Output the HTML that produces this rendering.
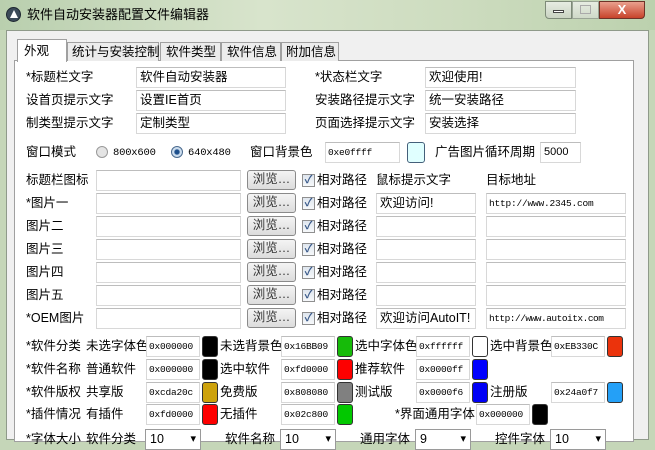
<!DOCTYPE html>
<html><head><meta charset="utf-8"><style>
*{margin:0;padding:0;box-sizing:border-box}
body{width:655px;height:440px;overflow:hidden;position:relative;background:#c5d6b8;font-family:"Liberation Sans","Noto Sans CJK SC",sans-serif;font-size:12.5px;color:#000}
.a{position:absolute;white-space:nowrap}
.t{line-height:16px}
.in{position:absolute;background:#fff;border:1px solid #d8d8d8;border-top-color:#bdbdbd;height:21px;line-height:19px;padding-left:3px;font-size:12.5px;white-space:nowrap;overflow:hidden}
.m{font-family:"Liberation Mono","Noto Sans CJK SC",monospace;font-size:9.5px;letter-spacing:-0.2px;padding-left:2px}
.btn{position:absolute;width:49px;height:20px;border:1px solid #8a8a8a;border-radius:3px;background:linear-gradient(#f4f4f4,#dcdcdc);text-align:center;line-height:17px;color:#333}
.cb{position:absolute;width:13px;height:13px;border:1px solid #8f8f8f;background:linear-gradient(#dfe6ee,#f6f8fa);font-size:11px;line-height:11px;text-align:center;color:#3a5a8a;font-weight:bold}
.sw{position:absolute;width:16px;height:21px;border:1px solid #333;border-radius:3px}
.sel{position:absolute;height:21px;background:#fff;border:1px solid #9a9a9a;padding-left:4px;line-height:19px}
.sel:after{content:"▾";position:absolute;right:4px;top:0;font-size:11px}
</style></head><body>
<div class="a" style="left:0;top:0;width:655px;height:30px;background:linear-gradient(90deg,#b9cfae,#d8e4cc 40%,#cddcbf 70%,#bcd1ae)"></div>
<div class="a" style="left:6px;top:7px;width:15px;height:15px;border-radius:50%;background:#3b4a58;border:1px solid #1d2730"></div>
<div class="a" style="left:10px;top:10px;width:0;height:0;border-left:4px solid transparent;border-right:4px solid transparent;border-bottom:8px solid #fff"></div>
<div class="a t" style="left:27px;top:7px;font-size:13px">软件自动安装器配置文件编辑器</div>
<div class="a" style="left:545px;top:1px;width:27px;height:18px;border:1px solid #7d8a78;border-radius:0 0 0 4px;background:linear-gradient(#e6ece2,#c9d3c2)"></div>
<div class="a" style="left:553px;top:10px;width:11px;height:3px;background:#fff;border:1px solid #444"></div>
<div class="a" style="left:572px;top:1px;width:27px;height:18px;border:1px solid #9aa596;background:linear-gradient(#e6ece2,#cfd9c8)"></div>
<div class="a" style="left:580px;top:5px;width:11px;height:9px;border:1px solid #aaa"></div>
<div class="a" style="left:599px;top:1px;width:46px;height:18px;border:1px solid #6f3328;border-radius:0 0 4px 0;background:linear-gradient(#e9a08e,#c8432b);color:#fff;text-align:center;font-weight:bold;line-height:16px;font-size:13px">X</div>
<div class="a" style="left:6px;top:30px;width:643px;height:410px;background:#f0f0f0;border:1px solid #8f9a8a"></div>
<div class="a" style="left:14px;top:60px;width:620px;height:382px;background:#fff;border:1px solid #a0a0a0"></div>
<div class="a t" style="left:17px;top:39px;width:50px;height:23px;background:#fff;border:1px solid #a0a0a0;border-bottom:none;padding:3px 0 0 6px">外观</div>
<div class="a t" style="left:67px;top:42px;width:92px;height:19px;background:#ececec;border:1px solid #a0a0a0;border-bottom:none;padding:1px 0 0 4px">统计与安装控制</div>
<div class="a t" style="left:160px;top:42px;width:61px;height:19px;background:#ececec;border:1px solid #a0a0a0;border-bottom:none;padding:1px 0 0 5px">软件类型</div>
<div class="a t" style="left:221px;top:42px;width:60px;height:19px;background:#ececec;border:1px solid #a0a0a0;border-bottom:none;padding:1px 0 0 5px">软件信息</div>
<div class="a t" style="left:281px;top:42px;width:58px;height:19px;background:#ececec;border:1px solid #a0a0a0;border-bottom:none;padding:1px 0 0 4px">附加信息</div>

<div class="a t" style="left:26px;top:69px">*标题栏文字</div>
<div class="in" style="left:136px;top:67px;width:150px">软件自动安装器</div>
<div class="a t" style="left:315px;top:69px">*状态栏文字</div>
<div class="in" style="left:425px;top:67px;width:151px">欢迎使用!</div>
<div class="a t" style="left:26px;top:92px">设首页提示文字</div>
<div class="in" style="left:136px;top:90px;width:150px">设置IE首页</div>
<div class="a t" style="left:315px;top:92px">安装路径提示文字</div>
<div class="in" style="left:425px;top:90px;width:151px">统一安装路径</div>
<div class="a t" style="left:26px;top:115px">制类型提示文字</div>
<div class="in" style="left:136px;top:113px;width:150px">定制类型</div>
<div class="a t" style="left:315px;top:115px">页面选择提示文字</div>
<div class="in" style="left:425px;top:113px;width:151px">安装选择</div>

<div class="a t" style="left:26px;top:144px">窗口模式</div>
<div class="a" style="left:96px;top:146px;width:12px;height:12px;border-radius:50%;border:1px solid #999;background:#e4e4e4"></div>
<div class="a t m" style="left:111px;top:145px;font-size:10.5px">800x600</div>
<div class="a" style="left:171px;top:146px;width:12px;height:12px;border-radius:50%;border:1px solid #4a6a8e;background:radial-gradient(#1d4f8c 30%,#cde 45%)"></div>
<div class="a t m" style="left:186px;top:145px;font-size:10.5px">640x480</div>
<div class="a t" style="left:250px;top:144px">窗口背景色</div>
<div class="in m" style="left:325px;top:142px;width:75px">0xe0ffff</div>
<div class="sw" style="left:407px;top:142px;width:18px;background:#e0ffff;border-color:#44607a"></div>
<div class="a t" style="left:435px;top:144px">广告图片循环周期</div>
<div class="in" style="left:540px;top:142px;width:41px;font-size:11px">5000</div>

<div class="a t" style="left:26px;top:172px">标题栏图标</div>
<div class="a t" style="left:376px;top:172px">鼠标提示文字</div>
<div class="a t" style="left:486px;top:172px">目标地址</div>
<div class="in" style="left:96px;top:170px;width:145px"></div>
<div class="btn" style="left:247px;top:170px">浏览…</div>
<div class="cb" style="left:302px;top:174px">✓</div>
<div class="a t" style="left:317px;top:172px">相对路径</div>

<div class="a t" style="left:26px;top:195px">*图片一</div>
<div class="in" style="left:96px;top:193px;width:145px"></div>
<div class="btn" style="left:247px;top:193px">浏览…</div>
<div class="cb" style="left:302px;top:197px">✓</div>
<div class="a t" style="left:317px;top:195px">相对路径</div>
<div class="in" style="left:376px;top:193px;width:100px">欢迎访问!</div>
<div class="in m" style="left:486px;top:193px;width:140px">http://www.2345.com</div>

<div class="a t" style="left:26px;top:218px">图片二</div>
<div class="in" style="left:96px;top:216px;width:145px"></div>
<div class="btn" style="left:247px;top:216px">浏览…</div>
<div class="cb" style="left:302px;top:220px">✓</div>
<div class="a t" style="left:317px;top:218px">相对路径</div>
<div class="in" style="left:376px;top:216px;width:100px"></div>
<div class="in" style="left:486px;top:216px;width:140px"></div>

<div class="a t" style="left:26px;top:241px">图片三</div>
<div class="in" style="left:96px;top:239px;width:145px"></div>
<div class="btn" style="left:247px;top:239px">浏览…</div>
<div class="cb" style="left:302px;top:243px">✓</div>
<div class="a t" style="left:317px;top:241px">相对路径</div>
<div class="in" style="left:376px;top:239px;width:100px"></div>
<div class="in" style="left:486px;top:239px;width:140px"></div>

<div class="a t" style="left:26px;top:264px">图片四</div>
<div class="in" style="left:96px;top:262px;width:145px"></div>
<div class="btn" style="left:247px;top:262px">浏览…</div>
<div class="cb" style="left:302px;top:266px">✓</div>
<div class="a t" style="left:317px;top:264px">相对路径</div>
<div class="in" style="left:376px;top:262px;width:100px"></div>
<div class="in" style="left:486px;top:262px;width:140px"></div>

<div class="a t" style="left:26px;top:287px">图片五</div>
<div class="in" style="left:96px;top:285px;width:145px"></div>
<div class="btn" style="left:247px;top:285px">浏览…</div>
<div class="cb" style="left:302px;top:289px">✓</div>
<div class="a t" style="left:317px;top:287px">相对路径</div>
<div class="in" style="left:376px;top:285px;width:100px"></div>
<div class="in" style="left:486px;top:285px;width:140px"></div>

<div class="a t" style="left:26px;top:310px">*OEM图片</div>
<div class="in" style="left:96px;top:308px;width:145px"></div>
<div class="btn" style="left:247px;top:308px">浏览…</div>
<div class="cb" style="left:302px;top:312px">✓</div>
<div class="a t" style="left:317px;top:310px">相对路径</div>
<div class="in" style="left:376px;top:308px;width:100px">欢迎访问AutoIT!</div>
<div class="in m" style="left:486px;top:308px;width:140px;letter-spacing:-0.5px">http://www.autoitx.com</div>

<div class="a t" style="left:26px;top:338px">*软件分类</div>
<div class="a t" style="left:86px;top:338px">未选字体色</div>
<div class="in m" style="left:146px;top:336px;width:54px">0x000000</div>
<div class="sw" style="left:202px;top:336px;background:#000"></div>
<div class="a t" style="left:220px;top:338px">未选背景色</div>
<div class="in m" style="left:281px;top:336px;width:54px">0x16BB09</div>
<div class="sw" style="left:337px;top:336px;background:#16bb09"></div>
<div class="a t" style="left:355px;top:338px">选中字体色</div>
<div class="in m" style="left:416px;top:336px;width:54px">0xffffff</div>
<div class="sw" style="left:472px;top:336px;background:#fff"></div>
<div class="a t" style="left:490px;top:338px">选中背景色</div>
<div class="in m" style="left:551px;top:336px;width:54px">0xEB330C</div>
<div class="sw" style="left:607px;top:336px;background:#eb330c"></div>

<div class="a t" style="left:26px;top:361px">*软件名称</div>
<div class="a t" style="left:86px;top:361px">普通软件</div>
<div class="in m" style="left:146px;top:359px;width:54px">0x000000</div>
<div class="sw" style="left:202px;top:359px;background:#000"></div>
<div class="a t" style="left:220px;top:361px">选中软件</div>
<div class="in m" style="left:281px;top:359px;width:54px">0xfd0000</div>
<div class="sw" style="left:337px;top:359px;background:#fd0000"></div>
<div class="a t" style="left:355px;top:361px">推荐软件</div>
<div class="in m" style="left:416px;top:359px;width:54px">0x0000ff</div>
<div class="sw" style="left:472px;top:359px;background:#0000ff"></div>

<div class="a t" style="left:26px;top:384px">*软件版权</div>
<div class="a t" style="left:86px;top:384px">共享版</div>
<div class="in m" style="left:146px;top:382px;width:54px">0xcda20c</div>
<div class="sw" style="left:202px;top:382px;background:#cda20c"></div>
<div class="a t" style="left:220px;top:384px">免费版</div>
<div class="in m" style="left:281px;top:382px;width:54px">0x808080</div>
<div class="sw" style="left:337px;top:382px;background:#808080"></div>
<div class="a t" style="left:355px;top:384px">测试版</div>
<div class="in m" style="left:416px;top:382px;width:54px">0x0000f6</div>
<div class="sw" style="left:472px;top:382px;background:#0000f6"></div>
<div class="a t" style="left:490px;top:384px">注册版</div>
<div class="in m" style="left:551px;top:382px;width:54px">0x24a0f7</div>
<div class="sw" style="left:607px;top:382px;background:#24a0f7"></div>

<div class="a t" style="left:26px;top:406px">*插件情况</div>
<div class="a t" style="left:86px;top:406px">有插件</div>
<div class="in m" style="left:146px;top:404px;width:54px">0xfd0000</div>
<div class="sw" style="left:202px;top:404px;background:#fd0000"></div>
<div class="a t" style="left:220px;top:406px">无插件</div>
<div class="in m" style="left:281px;top:404px;width:54px">0x02c800</div>
<div class="sw" style="left:337px;top:404px;background:#02c800"></div>
<div class="a t" style="left:395px;top:406px">*界面通用字体</div>
<div class="in m" style="left:476px;top:404px;width:54px">0x000000</div>
<div class="sw" style="left:532px;top:404px;background:#000"></div>

<div class="a t" style="left:26px;top:431px">*字体大小</div>
<div class="a t" style="left:86px;top:431px">软件分类</div>
<div class="sel" style="left:145px;top:429px;width:56px">10</div>
<div class="a t" style="left:225px;top:431px">软件名称</div>
<div class="sel" style="left:280px;top:429px;width:56px">10</div>
<div class="a t" style="left:360px;top:431px">通用字体</div>
<div class="sel" style="left:415px;top:429px;width:56px">9</div>
<div class="a t" style="left:495px;top:431px">控件字体</div>
<div class="sel" style="left:550px;top:429px;width:56px">10</div>
</body></html>
